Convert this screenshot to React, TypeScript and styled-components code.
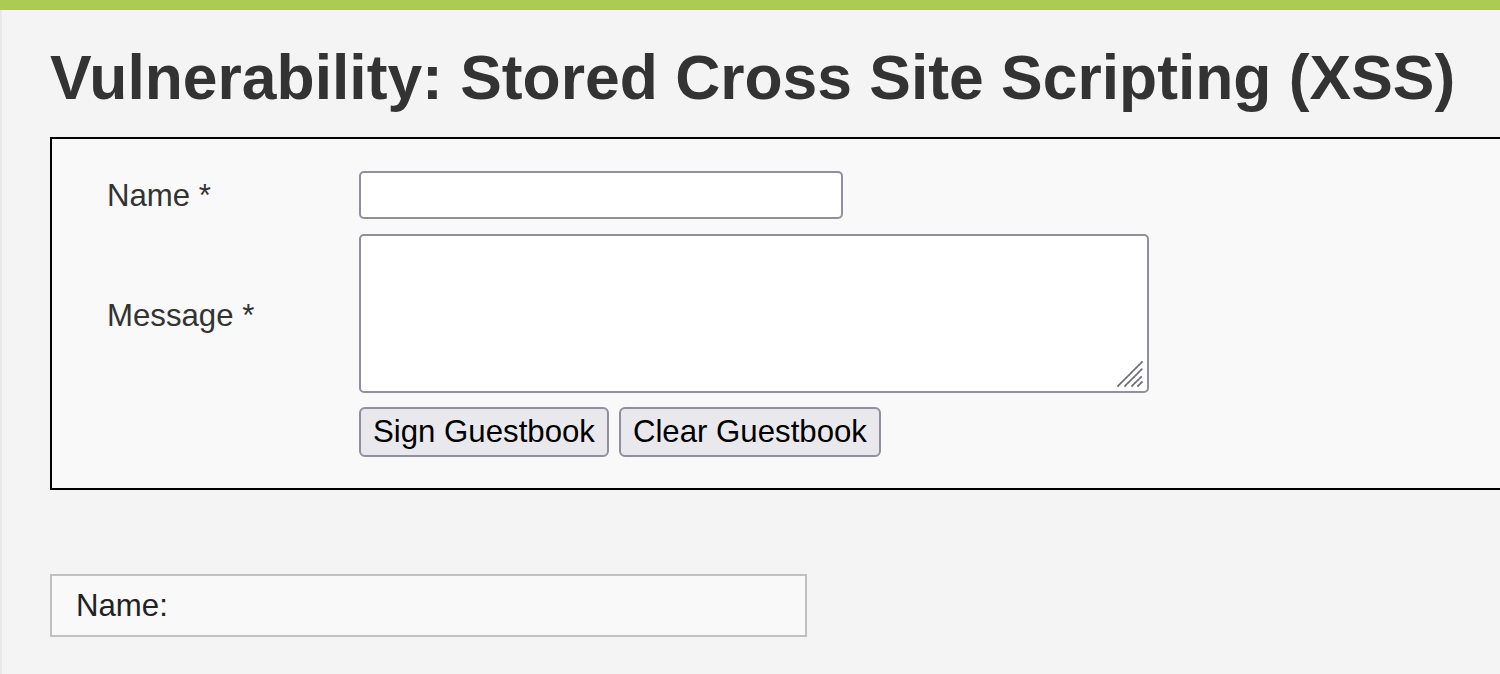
import React from "react";
import styled, { createGlobalStyle } from "styled-components";

const Global = createGlobalStyle`
  html, body { margin: 0; padding: 0; overflow: hidden; }
  body {
    background: #f4f4f4;
    font-family: "Liberation Sans", Arial, Helvetica, sans-serif;
    color: #333;
  }
`;

const TopBar = styled.div`
  height: 10px;
  background: #abcb51;
`;

const Main = styled.main`
  border-left: 2px solid #e9e9e9;
  padding: 33px 0 0 48px;
  min-height: 664px;
  box-sizing: border-box;
`;

const Title = styled.h1`
  margin: 0 0 24px 0;
  font-size: 62.4px;
  line-height: 70px;
  font-weight: bold;
  color: #333;
  white-space: nowrap;
`;

const CodeArea = styled.div`
  width: 1600px;
  border: 2px solid #000;
  background: #f8f9f8;
  padding: 32px 0 31px 55px;
  box-sizing: border-box;
`;

const FormGrid = styled.form`
  display: grid;
  grid-template-columns: 252px auto;
  row-gap: 15px;
  align-items: center;
  justify-content: start;
`;

const Label = styled.label<{ $shift?: number }>`
  font-size: 31.2px;
  color: #333;
  position: relative;
  top: ${(p) => p.$shift ?? 0}px;
`;

const Field = styled.div`
  display: flex;
`;

const TextInput = styled.input`
  width: 484px;
  height: 48px;
  box-sizing: border-box;
  border: 2px solid #8f8f9d;
  border-radius: 5px;
  background: #fff;
  font-size: 31.2px;
  font-family: inherit;
  padding: 0 6px;
`;

const AreaWrap = styled.div`
  position: relative;
  width: 790px;
  height: 159px;
`;

const TextArea = styled.textarea`
  width: 790px;
  height: 159px;
  box-sizing: border-box;
  border: 2px solid #8f8f9d;
  border-radius: 5px;
  background: #fff;
  font-size: 31.2px;
  font-family: inherit;
  resize: none;
  display: block;
`;

const Grip = styled.svg`
  position: absolute;
  right: 5px;
  bottom: 5px;
  width: 28px;
  height: 28px;
  pointer-events: none;
`;

const Buttons = styled.div`
  grid-column: 2;
  margin-top: -1px;
  display: flex;
  gap: 10px;
`;

const Button = styled.button`
  height: 50px;
  box-sizing: border-box;
  padding: 0 12px;
  font-family: "Liberation Sans", Arial, sans-serif;
  font-size: 31.2px;
  color: #000;
  background: #e9e9ed;
  border: 2px solid #8f8f9d;
  border-radius: 6px;
  line-height: 1;
`;

const Entry = styled.div`
  margin-top: 84px;
  width: 757px;
  height: 63px;
  box-sizing: border-box;
  border: 2px solid #c0c0c0;
  background: #f8f9f8;
  padding-left: 24px;
  display: flex;
  align-items: center;
  font-size: 31.2px;
  color: #222;
`;

export default function App() {
  return (
    <>
      <Global />
      <TopBar />
      <Main>
        <Title>Vulnerability: Stored Cross Site Scripting (XSS)</Title>
        <CodeArea>
          <FormGrid onSubmit={(e) => e.preventDefault()}>
            <Label htmlFor="txtName" $shift={1}>Name *</Label>
            <Field>
              <TextInput id="txtName" type="text" maxLength={10} />
            </Field>
            <Label htmlFor="mtxMessage" $shift={2}>Message *</Label>
            <Field>
              <AreaWrap>
                <TextArea id="mtxMessage" />
                <Grip viewBox="0 0 28 28" aria-hidden="true">
                  <g stroke="#6e6e78" strokeWidth="1.8" strokeLinecap="round" strokeDasharray="2.2 1.4" fill="none">
                    <line x1="2" y1="26" x2="26" y2="2" />
                    <line x1="9" y1="26" x2="26" y2="9" />
                    <line x1="16" y1="26" x2="26" y2="16" />
                    <line x1="22" y1="26" x2="26" y2="22" />
                  </g>
                </Grip>
              </AreaWrap>
            </Field>
            <Buttons>
              <Button type="submit">Sign Guestbook</Button>
              <Button type="button">Clear Guestbook</Button>
            </Buttons>
          </FormGrid>
        </CodeArea>
        <Entry>Name:</Entry>
      </Main>
    </>
  );
}
